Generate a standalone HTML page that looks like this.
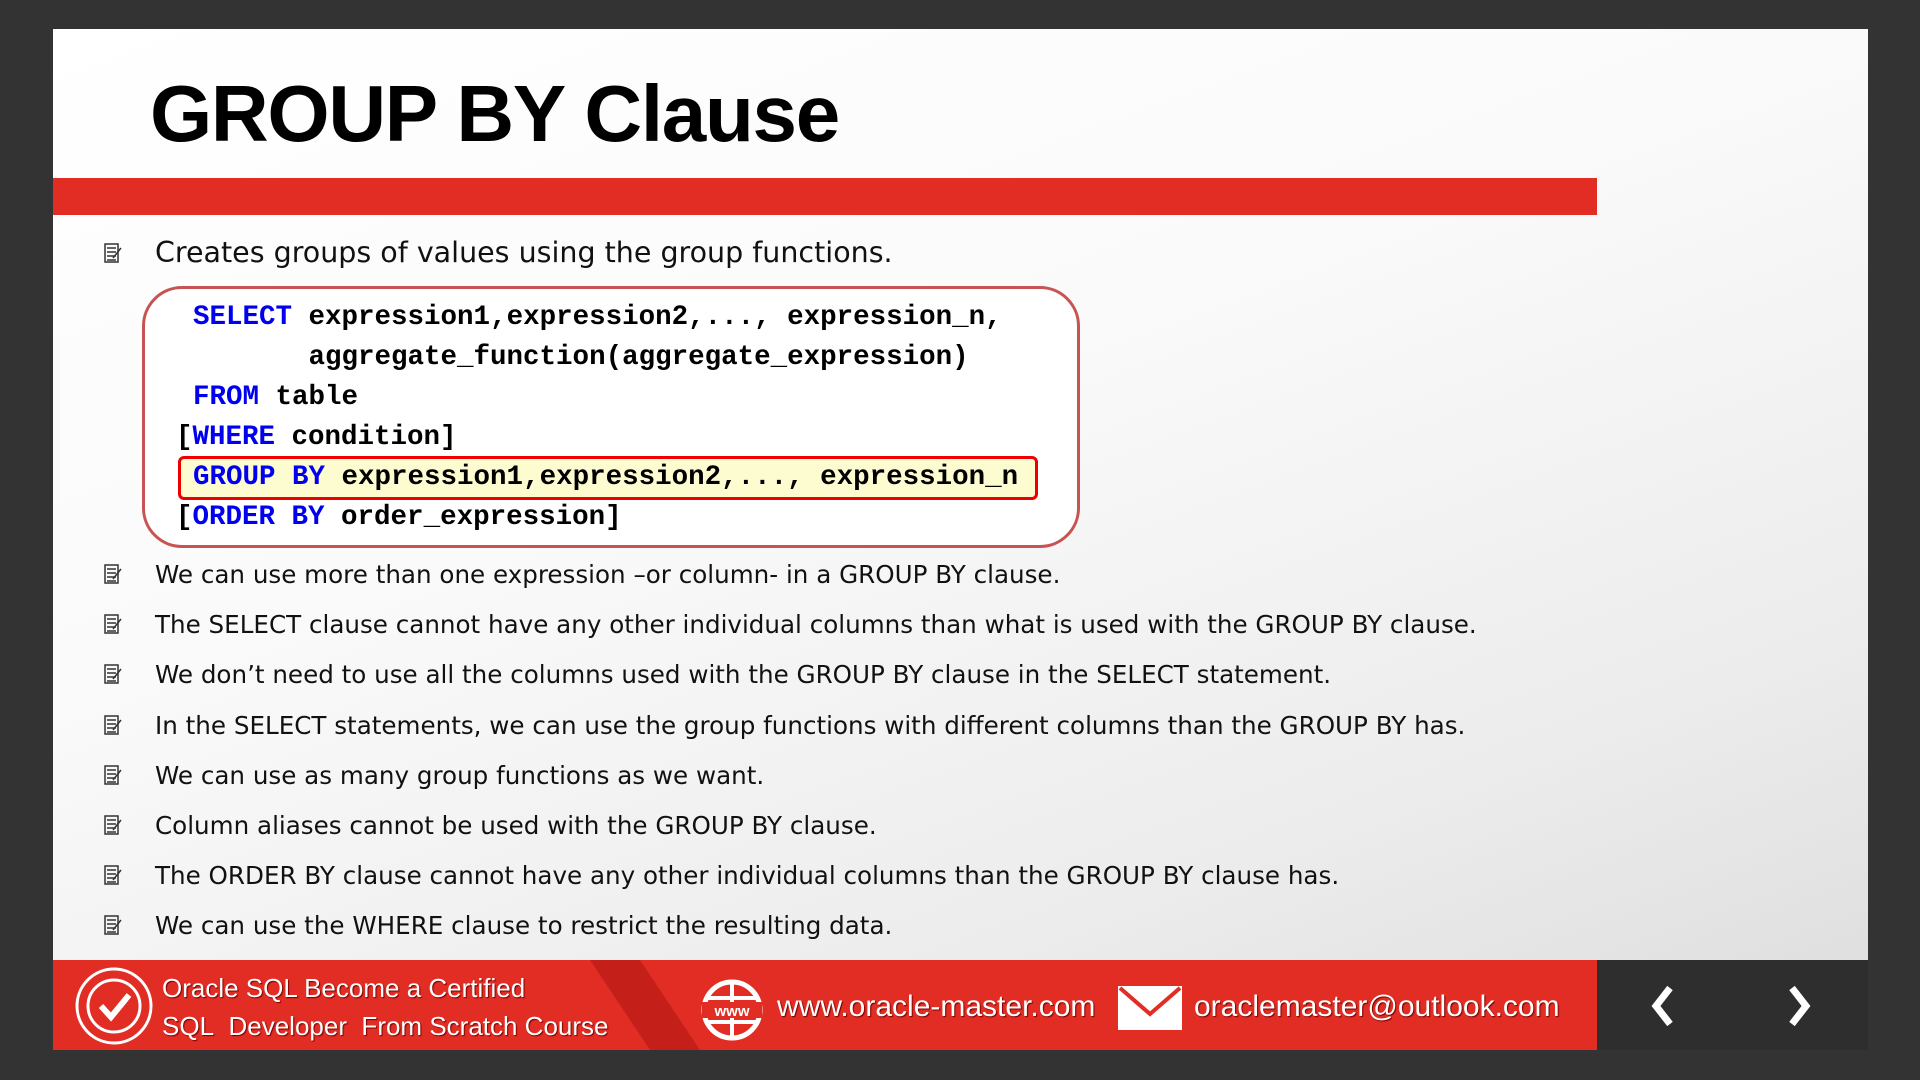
<!DOCTYPE html><html><head><style>
body{margin:0;width:1920px;height:1080px;background:#333;position:relative;overflow:hidden;font-family:"DejaVu Sans","Liberation Sans",sans-serif}
.slide{position:absolute;left:53px;top:29px;width:1815px;height:1021px;background:linear-gradient(160deg,#fff 0%,#fafafa 40%,#ececec 75%,#dcdcdc 100%)}
.title{position:absolute;left:150px;top:68px;font:bold 80px "Liberation Sans",sans-serif;color:#000;letter-spacing:-1.3px}
.bar{position:absolute;left:53px;top:178px;width:1544px;height:37px;background:#e12d23}
.b{position:absolute;left:155px;font-size:24.6px;color:#111;white-space:nowrap}
.ic{position:absolute;left:103px;width:20px;height:22px}
.code{position:absolute;left:142px;top:286px;width:932px;height:256px;border:3px solid #c85353;border-radius:40px;background:#fff}
.cl{position:absolute;font:bold 27.5px "Liberation Mono",monospace;color:#000;white-space:pre}
.k{color:#0000ee}
.hl{position:absolute;left:178px;top:456px;width:854px;height:38px;border:3px solid #e00;border-radius:6px;background:#fdfbd0}
.foot{position:absolute;left:53px;top:960px;width:1544px;height:90px;background:#e12d23}
.dark{position:absolute;left:1597px;top:960px;width:271px;height:90px;background:#2e2e2e}
.ft{position:absolute;color:#fff;font:26px "Liberation Sans",sans-serif;white-space:nowrap;text-shadow:1px 1px 1px #700}
</style></head><body>
<div class="slide"></div>
<div class="title">GROUP BY Clause</div>
<div class="bar"></div>
<svg class="ic" style="top:242px" viewBox="0 0 20 22"><g stroke="#333" fill="none" stroke-width="1.5"><rect x="2" y="2" width="13" height="18"/><path d="M4 6h9M4 10h9M4 14h9M4 18h9M10 16l8-10"/></g></svg>
<div class="b" style="top:236px;font-size:28.5px">Creates groups of values using the group functions.</div>
<div class="code"></div>
<div class="hl"></div>
<div class="cl" style="left:193px;top:302px"><span class="k">SELECT</span> expression1,expression2,..., expression_n,</div>
<div class="cl" style="left:193px;top:342px">       aggregate_function(aggregate_expression)</div>
<div class="cl" style="left:193px;top:382px"><span class="k">FROM</span> table</div>
<div class="cl" style="left:176px;top:422px">[<span class="k">WHERE</span> condition]</div>
<div class="cl" style="left:193px;top:462px"><span class="k">GROUP BY</span> expression1,expression2,..., expression_n</div>
<div class="cl" style="left:176px;top:502px">[<span class="k">ORDER BY</span> order_expression]</div>
<svg class="ic" style="top:563px" viewBox="0 0 20 22"><g stroke="#333" fill="none" stroke-width="1.5"><rect x="2" y="2" width="13" height="18"/><path d="M4 6h9M4 10h9M4 14h9M4 18h9M10 16l8-10"/></g></svg>
<div class="b" style="top:560px">We can use more than one expression –or column- in a GROUP BY clause.</div>
<svg class="ic" style="top:613px" viewBox="0 0 20 22"><g stroke="#333" fill="none" stroke-width="1.5"><rect x="2" y="2" width="13" height="18"/><path d="M4 6h9M4 10h9M4 14h9M4 18h9M10 16l8-10"/></g></svg>
<div class="b" style="top:610px">The SELECT clause cannot have any other individual columns than what is used with the GROUP BY clause.</div>
<svg class="ic" style="top:663px" viewBox="0 0 20 22"><g stroke="#333" fill="none" stroke-width="1.5"><rect x="2" y="2" width="13" height="18"/><path d="M4 6h9M4 10h9M4 14h9M4 18h9M10 16l8-10"/></g></svg>
<div class="b" style="top:660px">We don’t need to use all the columns used with the GROUP BY clause in the SELECT statement.</div>
<svg class="ic" style="top:714px" viewBox="0 0 20 22"><g stroke="#333" fill="none" stroke-width="1.5"><rect x="2" y="2" width="13" height="18"/><path d="M4 6h9M4 10h9M4 14h9M4 18h9M10 16l8-10"/></g></svg>
<div class="b" style="top:711px">In the SELECT statements, we can use the group functions with different columns than the GROUP BY has.</div>
<svg class="ic" style="top:764px" viewBox="0 0 20 22"><g stroke="#333" fill="none" stroke-width="1.5"><rect x="2" y="2" width="13" height="18"/><path d="M4 6h9M4 10h9M4 14h9M4 18h9M10 16l8-10"/></g></svg>
<div class="b" style="top:761px">We can use as many group functions as we want.</div>
<svg class="ic" style="top:814px" viewBox="0 0 20 22"><g stroke="#333" fill="none" stroke-width="1.5"><rect x="2" y="2" width="13" height="18"/><path d="M4 6h9M4 10h9M4 14h9M4 18h9M10 16l8-10"/></g></svg>
<div class="b" style="top:811px">Column aliases cannot be used with the GROUP BY clause.</div>
<svg class="ic" style="top:864px" viewBox="0 0 20 22"><g stroke="#333" fill="none" stroke-width="1.5"><rect x="2" y="2" width="13" height="18"/><path d="M4 6h9M4 10h9M4 14h9M4 18h9M10 16l8-10"/></g></svg>
<div class="b" style="top:861px">The ORDER BY clause cannot have any other individual columns than the GROUP BY clause has.</div>
<svg class="ic" style="top:914px" viewBox="0 0 20 22"><g stroke="#333" fill="none" stroke-width="1.5"><rect x="2" y="2" width="13" height="18"/><path d="M4 6h9M4 10h9M4 14h9M4 18h9M10 16l8-10"/></g></svg>
<div class="b" style="top:911px">We can use the WHERE clause to restrict the resulting data.</div>
<div class="foot"></div>
<svg style="position:absolute;left:590px;top:960px" width="120" height="90"><polygon points="0,0 50,0 110,90 60,90" fill="#c42019"/></svg>
<div class="dark"></div>
<svg style="position:absolute;left:74px;top:966px" width="80" height="80" viewBox="0 0 80 80"><circle cx="40" cy="40" r="37" fill="none" stroke="#fff" stroke-width="3"/><circle cx="40" cy="40" r="26" fill="none" stroke="#fff" stroke-width="3"/><path d="M27 40l10 11 18-22" fill="none" stroke="#fff" stroke-width="6"/></svg>
<div class="ft" style="left:162px;top:973px">Oracle SQL Become a Certified</div>
<div class="ft" style="left:162px;top:1011px">SQL&nbsp; Developer&nbsp; From Scratch Course</div>
<svg style="position:absolute;left:700px;top:978px" width="64" height="64" viewBox="0 0 64 64"><circle cx="32" cy="32" r="28" fill="none" stroke="#fff" stroke-width="5"/><path d="M32 4v56M6 20h52M6 44h52" stroke="#fff" stroke-width="4"/><rect x="2" y="24" width="60" height="16" fill="#e12d23"/><text x="32" y="38" fill="#fff" font-family="Liberation Sans" font-size="15" font-weight="bold" text-anchor="middle">www</text></svg>
<div class="ft" style="left:777px;top:990px;font-size:30px">www.oracle-master.com</div>
<svg style="position:absolute;left:1118px;top:986px" width="64" height="44" viewBox="0 0 64 44"><rect width="64" height="44" fill="#fff"/><path d="M2 2l30 26 30-26" fill="none" stroke="#e12d23" stroke-width="4"/></svg>
<div class="ft" style="left:1194px;top:990px;font-size:30px">oraclemaster@outlook.com</div>
<svg style="position:absolute;left:1648px;top:984px" width="200" height="44"><path d="M22 4L8 22l14 18" fill="none" stroke="#fff" stroke-width="7"/><path d="M144 4l14 18-14 18" fill="none" stroke="#fff" stroke-width="7"/></svg>
</body></html>
